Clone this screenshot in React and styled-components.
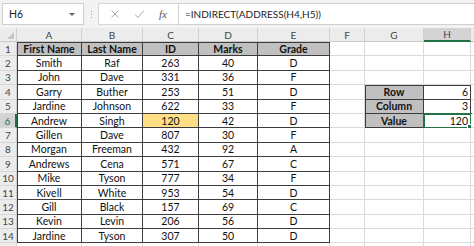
import React from "react";
import styled, { createGlobalStyle, css } from "styled-components";

const Global = createGlobalStyle`
  html, body { margin: 0; padding: 0; background: #ffffff; overflow: hidden; }
  body { font-family: "Lato", "Open Sans", sans-serif; }
`;

const Page = styled.div`
  width: 474px;
  height: 246px;
  overflow: hidden;
  background: #ffffff;
`;

const Bar = styled.div`
  height: 28px;
  box-sizing: border-box;
  background: #f3f3f3;
  display: flex;
  align-items: flex-start;
  padding: 3px 0 0 2px;
`;

const NameBox = styled.div`
  width: 82px;
  height: 22px;
  box-sizing: border-box;
  background: #fff;
  border: 1px solid #d0d0d0;
  display: flex;
  align-items: center;
  justify-content: space-between;
  padding: 0 8px 0 6px;
  font-size: 10.5px;
  color: #222;
`;

const Caret = styled.span`
  width: 0;
  height: 0;
  border-left: 3px solid transparent;
  border-right: 3px solid transparent;
  border-top: 3px solid #666;
`;

const Dots = styled.div`
  width: 14px;
  height: 22px;
  display: flex;
  flex-direction: column;
  align-items: center;
  justify-content: center;
  gap: 2px;
  & > i { width: 1px; height: 1px; background: #9a9a9a; display: block; }
`;

const IconBox = styled.div`
  width: 80px;
  height: 22px;
  box-sizing: border-box;
  background: #fff;
  border: 1px solid #d8d8d8;
  border-right: none;
  display: flex;
  align-items: center;
  justify-content: space-around;
  padding: 0 4px;
  color: #a0a0a0;
`;

const Fx = styled.span`
  font-family: "Liberation Serif", serif;
  font-style: italic;
  font-size: 11px;
  color: #555;
`;

const FormulaBox = styled.div`
  flex: 1;
  height: 22px;
  box-sizing: border-box;
  background: #fff;
  border: 1px solid #d0d0d0;
  border-right: none;
  display: flex;
  align-items: center;
  padding-left: 6px;
  font-size: 10px;
  color: #222;
`;

const Grid = styled.div`
  display: grid;
  grid-template-columns: 17px 65px 61px 56px 59px 72px 35px 59px 47px 1fr;
  grid-template-rows: 14px repeat(15, 14.4px);
`;

const DARK = "#3c3c3c";
const GRIDC = "#dadada";

const Cell = styled.div`
  position: relative;
  box-sizing: border-box;
  display: flex;
  align-items: center;
  justify-content: ${(p) => (p.$align === "right" ? "flex-end" : "center")};
  padding: 0 2px;
  font-size: 10.5px;
  color: #111;
  white-space: nowrap;
  overflow: visible;
  background: ${(p) => (p.$fill === "gray" ? "#c0c0c0" : p.$fill === "yellow" ? "#ffdf86" : "#fff")};
  font-weight: ${(p) => (p.$bold ? 700 : 400)};
  border-right: 1px solid ${(p) => (p.$br ? DARK : GRIDC)};
  border-bottom: 1px solid ${(p) => (p.$bb ? DARK : GRIDC)};
  ${(p) =>
    (p.$bl || p.$bt) &&
    css`
      box-shadow: ${[p.$bl ? `inset 1px 0 0 ${DARK}` : null, p.$bt ? `inset 0 1px 0 ${DARK}` : null]
        .filter(Boolean)
        .join(", ")};
    `}
`;

const ColHead = styled.div`
  box-sizing: border-box;
  display: flex;
  align-items: center;
  justify-content: center;
  font-size: 10px;
  color: #444;
  background: ${(p) => (p.$sel ? "#d4d4d4" : "#ececec")};
  border-right: 1px solid #d0d0d0;
  border-bottom: ${(p) => (p.$sel ? "2px solid #217346" : "1px solid #c8c8c8")};
`;

const Corner = styled.div`
  position: relative;
  box-sizing: border-box;
  background: #ececec;
  border-right: 1px solid #d0d0d0;
  border-bottom: 1px solid #c8c8c8;
  &::after {
    content: "";
    position: absolute;
    right: 2px;
    bottom: 2px;
    width: 0;
    height: 0;
    border-left: 7px solid transparent;
    border-bottom: 7px solid #c4c4c4;
  }
`;

const RowHead = styled.div`
  box-sizing: border-box;
  display: flex;
  align-items: center;
  justify-content: center;
  font-size: 10px;
  color: ${(p) => (p.$sel ? "#217346" : "#444")};
  background: ${(p) => (p.$sel ? "#d4d4d4" : "#ececec")};
  border-right: ${(p) => (p.$sel ? "2px solid #217346" : "1px solid #d0d0d0")};
  border-bottom: 1px solid #d6d6d6;
`;

const Selection = styled.div`
  position: absolute;
  left: -1px;
  top: -1px;
  right: -2px;
  bottom: -2px;
  border: 2px solid #217346;
  pointer-events: none;
  &::after {
    content: "";
    position: absolute;
    right: -4px;
    bottom: -4px;
    width: 5px;
    height: 5px;
    background: #217346;
    border: 1px solid #fff;
  }
`;

const cols = ["A", "B", "C", "D", "E", "F", "G", "H", ""];

const table = [
  ["First Name", "Last Name", "ID", "Marks", "Grade"],
  ["Smith", "Raf", "263", "40", "D"],
  ["John", "Dave", "331", "36", "F"],
  ["Garry", "Buther", "253", "51", "D"],
  ["Jardine", "Johnson", "622", "33", "F"],
  ["Andrew", "Singh", "120", "42", "D"],
  ["Gillen", "Dave", "807", "30", "F"],
  ["Morgan", "Freeman", "432", "92", "A"],
  ["Andrews", "Cena", "571", "67", "C"],
  ["Mike", "Tyson", "777", "34", "F"],
  ["Kivell", "White", "953", "54", "D"],
  ["Gill", "Black", "157", "69", "C"],
  ["Kevin", "Levin", "206", "56", "D"],
  ["Jardine", "Tyson", "307", "50", "D"],
];

const lookup = { 4: ["Row", "6"], 5: ["Column", "3"], 6: ["Value", "120"] };

function XIcon() {
  return (
    <svg width="10" height="10" viewBox="0 0 10 10">
      <path d="M1.5 1.5 L8.5 8.5 M8.5 1.5 L1.5 8.5" stroke="#a8a8a8" strokeWidth="1" fill="none" />
    </svg>
  );
}

function CheckIcon() {
  return (
    <svg width="11" height="10" viewBox="0 0 11 10">
      <path d="M1 5.5 L4 8.5 L10 1.5" stroke="#a8a8a8" strokeWidth="1" fill="none" />
    </svg>
  );
}

export default function App() {
  const rows = [];
  for (let r = 1; r <= 15; r++) {
    const cells = [];
    cells.push(
      <RowHead key="h" $sel={r === 6}>
        {r <= 14 ? r : ""}
      </RowHead>
    );
    for (let c = 0; c < 9; c++) {
      let props = {};
      let content = "";
      let sel = false;
      if (r <= 14 && c < 5) {
        content = table[r - 1][c];
        props = {
          $br: true,
          $bb: true,
          $bl: c === 0,
          $bt: r === 1,
          $bold: r === 1,
          $fill: r === 1 ? "gray" : r === 6 && c === 2 ? "yellow" : undefined,
        };
      } else if (lookup[r] && (c === 6 || c === 7)) {
        const [label, val] = lookup[r];
        if (c === 6) {
          content = label;
          props = { $br: true, $bb: true, $bl: true, $bt: r === 4, $bold: true, $fill: "gray" };
        } else {
          content = val;
          props = { $br: true, $bb: true, $bt: r === 4, $align: "right" };
          sel = r === 6;
        }
      }
      cells.push(
        <Cell key={c} {...props}>
          {content}
          {sel && <Selection />}
        </Cell>
      );
    }
    rows.push(<React.Fragment key={r}>{cells}</React.Fragment>);
  }

  return (
    <Page>
      <Global />
      <Bar>
        <NameBox>
          <span>H6</span>
          <Caret />
        </NameBox>
        <Dots>
          <i />
          <i />
          <i />
        </Dots>
        <IconBox>
          <XIcon />
          <CheckIcon />
          <Fx>fx</Fx>
        </IconBox>
        <FormulaBox>=INDIRECT(ADDRESS(H4,H5))</FormulaBox>
      </Bar>
      <Grid>
        <Corner />
        {cols.map((l, i) => (
          <ColHead key={i} $sel={l === "H"}>
            {l}
          </ColHead>
        ))}
        {rows}
      </Grid>
    </Page>
  );
}
